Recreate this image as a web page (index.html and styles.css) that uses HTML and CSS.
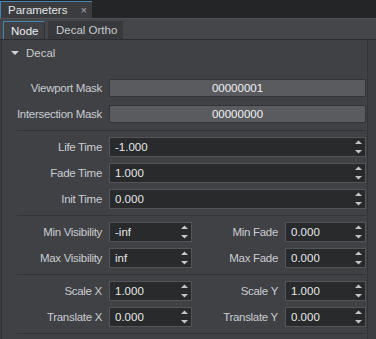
FILE: index.html
```html
<!DOCTYPE html>
<html lang="en">
<head>
  <meta charset="UTF-8">
  <title>Parameters</title>
  <link rel="stylesheet" href="styles.css">
</head>
<body>

<div class="titlebar">
  <div class="doc-tab">Parameters <span class="close">&times;</span></div>
</div>

<div class="tabbar">
  <div class="tab active">Node</div>
  <div class="tab">Decal Ortho</div>
</div>

<div class="panel">
  <div class="group-head"><span class="caret"></span>Decal</div>

  <div class="grid">
    <div class="label">Viewport Mask</div>
    <button class="mask wide">00000001</button>

    <div class="label">Intersection Mask</div>
    <button class="mask wide">00000000</button>

    <div class="sep"></div>

    <div class="label">Life Time</div>
    <div class="spin wide"><span>-1.000</span><svg class="arrows" viewBox="0 0 7 14" width="7" height="14"><polygon points="0,4 7,4 3.5,0.5"/><polygon points="0,10 7,10 3.5,13.5"/></svg></div>

    <div class="label">Fade Time</div>
    <div class="spin wide"><span>1.000</span><svg class="arrows" viewBox="0 0 7 14" width="7" height="14"><polygon points="0,4 7,4 3.5,0.5"/><polygon points="0,10 7,10 3.5,13.5"/></svg></div>

    <div class="label">Init Time</div>
    <div class="spin wide"><span>0.000</span><svg class="arrows" viewBox="0 0 7 14" width="7" height="14"><polygon points="0,4 7,4 3.5,0.5"/><polygon points="0,10 7,10 3.5,13.5"/></svg></div>

    <div class="sep"></div>

    <div class="label">Min Visibility</div>
    <div class="spin"><span>-inf</span><svg class="arrows" viewBox="0 0 7 14" width="7" height="14"><polygon points="0,4 7,4 3.5,0.5"/><polygon points="0,10 7,10 3.5,13.5"/></svg></div>
    <div class="label">Min Fade</div>
    <div class="spin"><span>0.000</span><svg class="arrows" viewBox="0 0 7 14" width="7" height="14"><polygon points="0,4 7,4 3.5,0.5"/><polygon points="0,10 7,10 3.5,13.5"/></svg></div>

    <div class="label">Max Visibility</div>
    <div class="spin"><span>inf</span><svg class="arrows" viewBox="0 0 7 14" width="7" height="14"><polygon points="0,4 7,4 3.5,0.5"/><polygon points="0,10 7,10 3.5,13.5"/></svg></div>
    <div class="label">Max Fade</div>
    <div class="spin"><span>0.000</span><svg class="arrows" viewBox="0 0 7 14" width="7" height="14"><polygon points="0,4 7,4 3.5,0.5"/><polygon points="0,10 7,10 3.5,13.5"/></svg></div>

    <div class="sep"></div>

    <div class="label">Scale X</div>
    <div class="spin"><span>1.000</span><svg class="arrows" viewBox="0 0 7 14" width="7" height="14"><polygon points="0,4 7,4 3.5,0.5"/><polygon points="0,10 7,10 3.5,13.5"/></svg></div>
    <div class="label">Scale Y</div>
    <div class="spin"><span>1.000</span><svg class="arrows" viewBox="0 0 7 14" width="7" height="14"><polygon points="0,4 7,4 3.5,0.5"/><polygon points="0,10 7,10 3.5,13.5"/></svg></div>

    <div class="label">Translate X</div>
    <div class="spin"><span>0.000</span><svg class="arrows" viewBox="0 0 7 14" width="7" height="14"><polygon points="0,4 7,4 3.5,0.5"/><polygon points="0,10 7,10 3.5,13.5"/></svg></div>
    <div class="label">Translate Y</div>
    <div class="spin"><span>0.000</span><svg class="arrows" viewBox="0 0 7 14" width="7" height="14"><polygon points="0,4 7,4 3.5,0.5"/><polygon points="0,10 7,10 3.5,13.5"/></svg></div>

    <div class="sep"></div>
  </div>
</div>

</body>
</html>
```

FILE: styles.css
```css
body {
  margin: 0;
  background-color: #3d3e42;
  font-family: "Liberation Sans", Arial, sans-serif;
  font-size: 11px;
  color: #c8cacd;
  overflow: hidden;
}

/* Title bar with the docked tab */
.titlebar {
  height: 18px;
  background-color: #242527;
  display: flex;
  align-items: flex-end;
}

.doc-tab {
  box-sizing: border-box;
  width: 92px;
  height: 17px;
  padding-left: 7px;
  background-color: #3a3c40;
  border-top: 1px solid #4585b3;
  border-left: 1px solid #4585b3;
  color: #e2e4e6;
  font-size: 11.5px;
  display: flex;
  align-items: center;
  justify-content: space-between;
  padding-right: 5px;
}

.close {
  color: #a8aaad;
  font-size: 11px;
}

/* Node / Decal Ortho */
.tabbar {
  box-sizing: border-box;
  height: 22px;
  background-color: #45464a;
  border-top: 1px solid #505155;
  border-bottom: 1px solid #2b2c2f;
  display: flex;
  align-items: flex-end;
  padding-left: 3px;
  gap: 3px;
}

.tab {
  box-sizing: border-box;
  height: 18px;
  width: 75px;
  padding-left: 8px;
  display: flex;
  align-items: center;
  background-color: #38393d;
  color: #c8cacd;
  font-size: 11.5px;
}

.tab.active {
  width: 42px;
  background-color: #404145;
  border-top: 1px solid #4585b3;
  border-left: 1px solid #4585b3;
  border-right: 1px solid #2f3033;
  color: #eceef0;
  padding-left: 7px;
}

/* Property panel */
.panel {
  margin-left: 1px;
  width: 364px;
  padding: 4px 1px 0 0;
  height: 295px;
  background-color: #404145;
  border-left: 1px solid #2d2e31;
  border-right: 1px solid #333437;
}

.group-head {
  height: 18px;
  display: flex;
  align-items: center;
  padding-left: 9px;
  color: #c8cacd;
  font-size: 11.5px;
}

.caret {
  width: 0;
  height: 0;
  border-left: 4px solid transparent;
  border-right: 4px solid transparent;
  border-top: 4px solid #d0d2d4;
  margin-right: 7px;
}

.grid {
  margin-top: 16px;
  display: grid;
  grid-template-columns: 100px 83px 79px 81px;
  column-gap: 7px;
  row-gap: 6px;
}

.label {
  height: 20px;
  display: flex;
  align-items: center;
  justify-content: flex-end;
  white-space: nowrap;
  font-size: 11.5px;
  letter-spacing: -0.3px;
  color: #c9ccd0;
}

.wide {
  grid-column: 2 / -1;
}

.sep {
  grid-column: 1 / -1;
  height: 1px;
  margin-left: 15px;
  background-color: #333437;
}

.mask {
  margin: 1px 0;
  height: 18px;
  padding: 0;
  background-color: #5a5b5f;
  border: 1px solid #333437;
  border-radius: 2px;
  color: #f0f2f4;
  font-family: "Liberation Sans", Arial, sans-serif;
  font-size: 11.5px;
}

.spin {
  box-sizing: border-box;
  height: 20px;
  background-color: #292a2c;
  border: 1px solid #535458;
  display: flex;
  align-items: center;
  justify-content: space-between;
  padding: 0 3px 0 5px;
  color: #e6e8ea;
  font-size: 11.5px;
}

.arrows {
  fill: #c4c6c8;
}
```
